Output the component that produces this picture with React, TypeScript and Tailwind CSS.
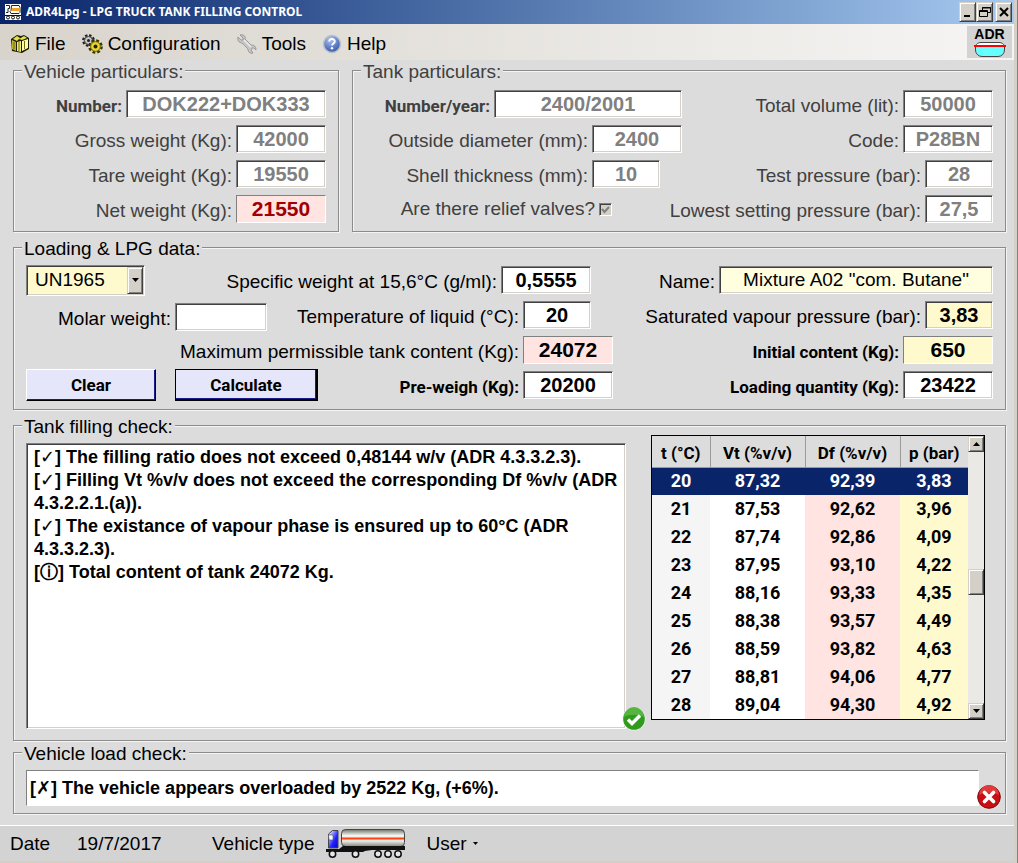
import React from 'react';
import clsx from 'clsx';

const sunken =
  'border border-t-[#808080] border-l-[#808080] border-b-white border-r-white shadow-[inset_1px_1px_0_#404040,inset_-1px_-1px_0_#d4d0c8]';
const flat = 'border border-t-[#808080] border-l-[#808080] border-b-white border-r-white';
const raised =
  'border border-t-[#d4d0c8] border-l-[#d4d0c8] border-b-[#404040] border-r-[#404040] bg-[#d4d0c8] shadow-[inset_1px_1px_0_#ffffff,inset_-1px_-1px_0_#808080]';
const narrow = "font-['Roboto',sans-serif] font-bold text-[17px]";

interface FieldProps {
  id: string;
  label: string;
  value: string;
  width: string;
  tone?: 'white' | 'pink' | 'yellow' | 'cream';
  className?: string;
  inputClass?: string;
  boldLabel?: boolean;
  isFlat?: boolean;
  disabled?: boolean;
}

const tones = {
  white: 'bg-white',
  pink: 'bg-[#ffe4e1]',
  yellow: 'bg-[#fffacd]',
  cream: 'bg-[#ffffe0]'
};

function Field({
  id,
  label,
  value,
  width,
  tone = 'white',
  className,
  inputClass = 'font-bold text-[20px]',
  boldLabel,
  isFlat,
  disabled
}: FieldProps) {
  return (
    <div className={clsx('flex h-7 items-center justify-end gap-1', className)}>
      <label htmlFor={id} className={clsx('pt-1 whitespace-nowrap', boldLabel && narrow)}>
        {label}
      </label>
      <input
        id={id}
        defaultValue={value}
        disabled={disabled}
        className={clsx(
          'h-7 shrink-0 text-center',
          width,
          tones[tone],
          isFlat ? flat : sunken,
          inputClass,
          disabled && 'text-[#808080]'
        )}
      />
    </div>
  );
}

interface GroupProps {
  title: string;
  className?: string;
  children: React.ReactNode;
}

function Group({ title, className, children }: GroupProps) {
  return (
    <fieldset
      className={clsx(
        'min-w-0 border border-[#8c8c8c] px-3 shadow-[1px_1px_0_#f4f4f4,inset_1px_1px_0_#f4f4f4]',
        className
      )}
    >
      <legend className="-ml-1 bg-[#dcdcdc] px-0.5 pt-1 leading-4">{title}</legend>
      {children}
    </fieldset>
  );
}

function BoxIcon() {
  return (
    <svg width="20" height="20" viewBox="0 0 20 20" aria-hidden="true">
      <path d="M1 5l6-4 4 1 3-1 5 3v11l-7 4-10-2z" fill="#1c1c08" />
      <path d="M2 6l4 2v9l-4-2z" fill="#b8b432" />
      <path d="M7 8l4-1v11l-4-1z" fill="#f2ee6c" />
      <path d="M12 7l6-2v9l-6 3z" fill="#fffca8" />
      <path d="M3 5l4-3 3 2-3 3zM9 5l5-3 3 2-5 2z" fill="#e8e04a" />
      <path d="M4 8v7M9 8v9M14.500 7v8" stroke="#6e6a10" strokeWidth="1" />
    </svg>
  );
}

function GearsIcon() {
  return (
    <svg width="21" height="20" viewBox="0 0 21 20" aria-hidden="true">
      <circle cx="6.500" cy="6.500" r="4.800" fill="#b8b8b8" stroke="#222" strokeWidth="3.200" strokeDasharray="2.200 1.570" />
      <circle cx="6.500" cy="6.500" r="4" fill="#c8c8c8" stroke="#444" />
      <circle cx="6.500" cy="6.500" r="1.500" fill="#222" />
      <circle cx="13.500" cy="12.500" r="5.500" fill="#c9b92a" stroke="#3a3400" strokeWidth="3.600" strokeDasharray="2.500 1.820" />
      <circle cx="13.500" cy="12.500" r="4.800" fill="#e6d83a" stroke="#7a6d00" />
      <circle cx="13.500" cy="12.500" r="2" fill="#2a2500" />
    </svg>
  );
}

function WrenchIcon() {
  return (
    <svg width="20" height="20" viewBox="0 0 20 20" aria-hidden="true">
      <path
        d="M3 1l3 3 0 2-2 0-3-3c-1 3 1 6 4 6l6 6c0 3 2 5 5 4l-2-3 1-2 2 0 2 2c0-4-2-5-5-5L8 5C9 2 6 0 3 1z"
        fill="#c6c6c6"
        stroke="#8e8e8e"
        strokeWidth="0.800"
      />
      <path d="M7 6l7 7" stroke="#eeeeee" strokeWidth="1.200" />
    </svg>
  );
}

function HelpIcon() {
  return (
    <svg width="20" height="20" viewBox="0 0 20 20" aria-hidden="true">
      <defs>
        <radialGradient id="help-fill" cx="0.4" cy="0.25" r="0.8">
          <stop offset="0" stopColor="#b4c6ee" />
          <stop offset="0.6" stopColor="#5d7cc4" />
          <stop offset="1" stopColor="#35549c" />
        </radialGradient>
      </defs>
      <circle cx="10" cy="10" r="8.500" fill="url(#help-fill)" stroke="#b9bfcd" strokeWidth="1.500" />
      <path d="M7.200 7.600c0-3.600 5.800-3.400 5.600 0-.1 1.900-2.800 2-2.800 4" fill="none" stroke="#fff" strokeWidth="1.900" />
      <circle cx="10" cy="14.300" r="1.200" fill="#fff" />
    </svg>
  );
}

function AppIcon() {
  return (
    <svg width="16" height="16" viewBox="0 0 16 16" aria-hidden="true">
      <rect width="16" height="16" fill="#fff" />
      <path d="M1 1.500h3.500v3H3v4H1M6.500 1.500H14l1 2v5l-1 1H6l-1-2 1-1z" fill="#fff" stroke="#222" />
      <rect x="7" y="4" width="8" height="3" fill="#f0a030" />
      <path d="M0 11.500h16" stroke="#111" />
      <g fill="#fff" stroke="#111">
        <circle cx="3" cy="13.500" r="1.500" />
        <circle cx="8" cy="13.500" r="1.500" />
        <circle cx="13" cy="13.500" r="1.500" />
      </g>
    </svg>
  );
}

function TankIcon() {
  return (
    <svg width="32" height="17" viewBox="0 0 32 17" aria-hidden="true">
      <path d="M2 5h28v4a6 6 0 0 1-6 6H8a6 6 0 0 1-6-6z" fill="#66ffff" />
      <path d="M2 5c0-2 2-3.500 5-3.500h18c3 0 5 1.500 5 3.500" fill="#fff" stroke="#444" />
      <path d="M1.500 5v4a6.500 6.500 0 0 0 6.500 6.500h16a6.500 6.500 0 0 0 6.500-6.500V5" fill="none" stroke="#444" />
      <path d="M0 5h32" stroke="#f00" strokeWidth="2" />
    </svg>
  );
}

function TruckIcon() {
  return (
    <svg width="80" height="31" viewBox="0 0 80 31" aria-hidden="true">
      <defs>
        <linearGradient id="tank-body" x1="0" y1="0" x2="0" y2="1">
          <stop offset="0" stopColor="#70746c" />
          <stop offset="0.35" stopColor="#f4f4f0" />
          <stop offset="0.7" stopColor="#e4e4de" />
          <stop offset="1" stopColor="#84887e" />
        </linearGradient>
        <linearGradient id="cab" x1="0" y1="0" x2="1" y2="1">
          <stop offset="0.1" stopColor="#e4e6ff" />
          <stop offset="0.6" stopColor="#2020ff" />
          <stop offset="1" stopColor="#0000c8" />
        </linearGradient>
      </defs>
      <path d="M2.500 20V6l4-3.500H12V20z" fill="url(#cab)" stroke="#445" />
      <path d="M2.500 7h4.500v5H3z" fill="#fff" stroke="#556" strokeWidth="0.700" />
      <rect x="15.500" y="1.500" width="63" height="17" rx="4" fill="url(#tank-body)" stroke="#444" />
      <path d="M16 10.500h62" stroke="#ff4010" strokeWidth="2" />
      <path d="M0 21h13l4-3h62v4H46l-7 1-2 1H0z" fill="#111" />
      <g fill="#e8e8e8" stroke="#111" strokeWidth="1.500">
        <circle cx="6.500" cy="26" r="3.200" />
        <circle cx="29.500" cy="26" r="3.200" />
        <circle cx="52" cy="26" r="3.200" />
        <circle cx="62" cy="26" r="3.200" />
        <circle cx="72" cy="26" r="3.200" />
      </g>
    </svg>
  );
}

function OkBadge() {
  return (
    <svg width="24" height="24" viewBox="0 0 24 24" role="img" aria-label="OK">
      <circle cx="12" cy="12" r="11.500" fill="#e8f4e4" />
      <circle cx="12" cy="12" r="10.800" fill="#2f9a1c" />
      <path d="M2 10a10 10 0 0 1 20 0c-5-3-15-3-20 0z" fill="#56b540" />
      <path d="M6 12.500l4 4 8-8" fill="none" stroke="#fff" strokeWidth="3.400" />
    </svg>
  );
}

function ErrorBadge() {
  return (
    <svg width="24" height="24" viewBox="0 0 24 24" role="img" aria-label="Error">
      <circle cx="12" cy="12" r="11.300" fill="#c80f14" stroke="#7c0a0c" />
      <path d="M2 10a10 10 0 0 1 20 0c-5-3-15-3-20 0z" fill="#e03a3a" />
      <path d="M7.500 7.500l9 9M16.500 7.500l-9 9" stroke="#fff" strokeWidth="3.600" strokeLinecap="round" />
    </svg>
  );
}

const menu = [
  { label: 'File', icon: <BoxIcon /> },
  { label: 'Configuration', icon: <GearsIcon /> },
  { label: 'Tools', icon: <WrenchIcon /> },
  { label: 'Help', icon: <HelpIcon /> }
];

const rows = [
  ['20', '87,32', '92,39', '3,83'],
  ['21', '87,53', '92,62', '3,96'],
  ['22', '87,74', '92,86', '4,09'],
  ['23', '87,95', '93,10', '4,22'],
  ['24', '88,16', '93,33', '4,35'],
  ['25', '88,38', '93,57', '4,49'],
  ['26', '88,59', '93,82', '4,63'],
  ['27', '88,81', '94,06', '4,77'],
  ['28', '89,04', '94,30', '4,92']
];

const columns = [
  { label: 't (°C)', width: 'w-[58px]', tone: 'bg-[#f5f5f5]' },
  { label: 'Vt (%v/v)', width: 'w-[95px]', tone: 'bg-white' },
  { label: 'Df (%v/v)', width: 'w-[95px]', tone: 'bg-[#ffe4e1]' },
  { label: 'p (bar)', width: 'w-[68px]', tone: 'bg-[#fffacd]' }
];

const fillingReport = `[✓] The filling ratio does not exceed 0,48144 w/v (ADR 4.3.3.2.3).
[✓] Filling Vt %v/v does not exceed the corresponding Df %v/v (ADR 4.3.2.2.1.(a)).
[✓] The existance of vapour phase is ensured up to 60°C (ADR 4.3.3.2.3).
[ⓘ] Total content of tank 24072 Kg.`;

const reportFont = "font-['Liberation_Sans','DejaVu_Sans',sans-serif] text-[18px] font-bold";

function TitleBar() {
  return (
    <header className="flex h-6 items-center bg-linear-to-r from-[#0a246a] to-[#a6caf0] pr-0.5 pl-[5px]">
      <AppIcon />
      <h1 className="ml-[5px] font-['Noto_Sans','Open_Sans',sans-serif] text-[12px] font-bold text-white">
        ADR4Lpg - LPG TRUCK TANK FILLING CONTROL
      </h1>
      <div className="ml-auto flex">
        <button aria-label="Minimize" className={clsx('h-5 w-[17px]', raised)}>
          <svg width="14" height="14" viewBox="0 0 14 14" className="mx-auto">
            <path d="M3 11h6" stroke="#000" strokeWidth="2" />
          </svg>
        </button>
        <button aria-label="Restore" className={clsx('h-5 w-[17px]', raised)}>
          <svg width="14" height="14" viewBox="0 0 14 14" className="mx-auto" fill="none" stroke="#000">
            <path d="M4.500 5V2.500h8v5H10M4 3h9" />
            <path d="M1.500 5.500h8v6h-8zM1 6.500h9" />
          </svg>
        </button>
        <button aria-label="Close" className={clsx('ml-0.5 h-5 w-[17px]', raised)}>
          <svg width="14" height="14" viewBox="0 0 14 14" className="mx-auto">
            <path d="M3 3l8 8M11 3l-8 8" stroke="#000" strokeWidth="2" />
          </svg>
        </button>
      </div>
    </header>
  );
}

function ScrollBar() {
  return (
    <div className="flex w-4 flex-col bg-[#ebe9e5]">
      <button aria-label="Scroll up" className={clsx('flex h-4 items-center justify-center', raised)}>
        <svg width="7" height="4" viewBox="0 0 7 4">
          <path d="M0 4l3.500-4L7 4z" />
        </svg>
      </button>
      <div className="h-[117px]" />
      <div className={clsx('h-[26px]', raised)} />
      <div className="flex-1" />
      <button aria-label="Scroll down" className={clsx('flex h-4 items-center justify-center', raised)}>
        <svg width="7" height="4" viewBox="0 0 7 4">
          <path d="M0 0l3.500 4L7 0z" />
        </svg>
      </button>
    </div>
  );
}

function PressureTable() {
  return (
    <div className="flex shrink-0 self-start border border-black">
      <table className={clsx('table-fixed border-collapse text-center', narrow)}>
        <thead>
          <tr className="h-[31px] bg-[#dcdcdc]">
            {columns.map(col => (
              <th
                key={col.label}
                className={clsx('border-r border-b border-[#9a9a9a] p-0 pt-1 leading-6 last:border-r-0', col.width)}
              >
                {col.label}
              </th>
            ))}
          </tr>
        </thead>
        <tbody>
          {rows.map((row, i) => (
            <tr key={row[0]} className={clsx('h-7 text-[18px]', i === 0 && 'text-white')}>
              {row.map((cell, j) => (
                <td key={j} className={clsx('p-0 leading-6', i === 0 ? 'bg-[#0a246a]' : columns[j].tone)}>
                  {cell}
                </td>
              ))}
            </tr>
          ))}
        </tbody>
      </table>
      <ScrollBar />
    </div>
  );
}

export default function App() {
  return (
    <div className="flex min-h-screen flex-col border-r border-[#808080] bg-[#d4d0c8] pr-[3px] pb-0.5 font-['Liberation_Sans',Arial,sans-serif] text-[19px] leading-6 text-black">
      <TitleBar />

      <nav className="flex h-9 items-center bg-linear-to-r from-[#d8d4cc] to-[#f6f5f4] pr-0.5 pl-[10px]">
        <div className="flex gap-4 pt-[3px]">
          {menu.map(item => (
            <button key={item.label} className="flex items-center gap-[5px]">
              {item.icon}
              {item.label}
            </button>
          ))}
        </div>
        <div className="ml-auto flex h-8 w-[45px] flex-col items-center bg-[#d3d3d3] pt-0.5">
          <span className="text-[14px] leading-[13px] font-bold">ADR</span>
          <TankIcon />
        </div>
      </nav>

      <main className="flex flex-1 flex-col bg-[#dcdcdc] pr-2 pb-[11px] pl-[13px]">
        <div className="flex gap-[13px] text-[#404040]">
          <Group title="Vehicle particulars:" className="w-[326px] shrink-0">
            <div className="flex flex-col gap-[7px] pt-[10px] pb-2">
              <Field id="number" label="Number:" value="DOK222+DOK333" width="w-[200px]" boldLabel disabled />
              <Field id="gross" label="Gross weight (Kg):" value="42000" width="w-[90px]" disabled />
              <Field id="tare" label="Tare weight (Kg):" value="19550" width="w-[90px]" disabled />
              <Field
                id="net"
                label="Net weight (Kg):"
                value="21550"
                width="w-[90px]"
                tone="pink"
                isFlat
                inputClass="font-bold text-[21px] text-[#a00000]"
              />
            </div>
          </Group>

          <Group title="Tank particulars:" className="flex-1">
            <div className="flex pt-[10px] pb-2">
              <div className="flex w-[317px] shrink-0 flex-col gap-[7px]">
                <Field id="year" label="Number/year:" value="2400/2001" width="w-[188px]" boldLabel disabled />
                <Field id="diameter" label="Outside diameter (mm):" value="2400" width="w-[90px]" disabled />
                <Field
                  id="shell"
                  label="Shell thickness (mm):"
                  value="10"
                  width="w-[68px]"
                  className="pr-[22px]"
                  disabled
                />
                <div className="flex h-7 items-center justify-end gap-1 pr-[70px]">
                  <label htmlFor="relief" className="whitespace-nowrap">
                    Are there relief valves?
                  </label>
                  <span className="relative flex">
                    <input
                      id="relief"
                      type="checkbox"
                      defaultChecked
                      disabled
                      className={clsx('h-[13px] w-[13px] appearance-none bg-[#d4d0c8]', sunken)}
                    />
                    <svg width="13" height="13" viewBox="0 0 13 13" className="pointer-events-none absolute inset-0">
                      <path d="M3 6l2.500 3L10 4" fill="none" stroke="#808080" strokeWidth="2" />
                    </svg>
                  </span>
                </div>
              </div>
              <div className="flex min-w-0 flex-1 flex-col gap-[7px]">
                <Field id="volume" label="Total volume (lit):" value="50000" width="w-[90px]" disabled />
                <Field id="code" label="Code:" value="P28BN" width="w-[90px]" disabled />
                <Field id="test" label="Test pressure (bar):" value="28" width="w-[68px]" disabled />
                <Field id="lowest" label="Lowest setting pressure (bar):" value="27,5" width="w-[68px]" disabled />
              </div>
            </div>
          </Group>
        </div>

        <Group title="Loading & LPG data:" className="mt-[5px]">
          <div className="flex flex-col gap-[7px] pt-[9px] pb-[10px]">
            <div className="flex h-7 items-center">
              <div className="relative">
                <select
                  aria-label="UN number"
                  defaultValue="UN1965"
                  className={clsx('h-[31px] w-[119px] appearance-none bg-[#fffacd] pl-2', sunken)}
                >
                  <option>UN1965</option>
                </select>
                <span
                  className={clsx(
                    'pointer-events-none absolute top-0.5 right-0.5 bottom-0.5 flex w-4 items-center justify-center',
                    raised
                  )}
                >
                  <svg width="7" height="4" viewBox="0 0 7 4">
                    <path d="M0 0l3.500 4L7 0z" />
                  </svg>
                </span>
              </div>
              <Field
                id="specific"
                label="Specific weight at 15,6°C (g/ml):"
                value="0,5555"
                width="w-[90px]"
                className="ml-auto pr-[22px]"
              />
              <Field
                id="name"
                label="Name:"
                value={'Mixture A02 "com. Butane"'}
                width="w-[274px]"
                tone="cream"
                inputClass="text-[19px]"
                className="w-[380px]"
              />
            </div>
            <div className="flex h-7 items-center">
              <Field id="molar" label="Molar weight:" value="" width="w-[92px]" className="ml-8 pt-1" />
              <Field
                id="temperature"
                label="Temperature of liquid (°C):"
                value="20"
                width="w-[68px]"
                className="ml-auto pr-[22px]"
              />
              <Field
                id="vapour"
                label="Saturated vapour pressure (bar):"
                value="3,83"
                width="w-[68px]"
                tone="yellow"
                className="w-[380px]"
              />
            </div>
            <div className="flex h-7 items-center">
              <Field
                id="maximum"
                label="Maximum permissible tank content (Kg):"
                value="24072"
                width="w-[90px]"
                tone="pink"
                isFlat
                inputClass="font-bold text-[21px]"
                className="ml-auto"
              />
              <Field
                id="initial"
                label="Initial content (Kg):"
                value="650"
                width="w-[90px]"
                tone="yellow"
                isFlat
                boldLabel
                inputClass="font-bold text-[21px]"
                className="w-[380px]"
              />
            </div>
            <div className="flex h-7 items-center">
              <button
                className={clsx(
                  'h-8 w-[130px] border border-t-white border-l-white border-r-black border-b-black bg-[#e6e6fa] shadow-[inset_-1px_-1px_0_#1a1a8c]',
                  narrow
                )}
              >
                Clear
              </button>
              <button
                className={clsx(
                  'ml-[19px] h-8 w-[143px] border border-r-2 border-b-2 border-black bg-[#e6e6fa] shadow-[inset_-1px_-1px_0_#1a1a8c]',
                  narrow
                )}
              >
                Calculate
              </button>
              <Field
                id="preweigh"
                label="Pre-weigh (Kg):"
                value="20200"
                width="w-[90px]"
                boldLabel
                className="ml-auto"
              />
              <Field
                id="quantity"
                label="Loading quantity (Kg):"
                value="23422"
                width="w-[90px]"
                boldLabel
                className="w-[380px]"
              />
            </div>
          </div>
        </Group>

        <Group title="Tank filling check:" className="mt-[5px] flex flex-1 flex-col">
          <div className="flex h-full gap-[25px] pr-2 pb-[11px]">
            <div className="relative mt-2 flex min-h-[286px] flex-1">
              <textarea
                aria-label="Tank filling check"
                readOnly
                value={fillingReport}
                className={clsx(
                  'flex-1 resize-none overflow-hidden bg-white px-[7px] py-0.5 leading-[23px]',
                  sunken,
                  reportFont
                )}
              />
              <span className="absolute -right-5 -bottom-[2px]">
                <OkBadge />
              </span>
            </div>
            <PressureTable />
          </div>
        </Group>

        <Group title="Vehicle load check:" className="mt-px">
          <div className="relative pt-2 pr-[14px] pb-[7px]">
            <input
              aria-label="Vehicle load check"
              readOnly
              value="[✗] The vehicle appears overloaded by 2522 Kg, (+6%)."
              className={clsx('block h-9 w-full bg-white px-[3px]', flat, reportFont)}
            />
            <span className="absolute -right-2 bottom-1">
              <ErrorBadge />
            </span>
          </div>
        </Group>
      </main>

      <footer className="flex h-9 items-center border-t border-white bg-[#d3d3d3] pl-[10px]">
        <span className="w-[67px]">Date</span>
        <span className="w-[135px]">19/7/2017</span>
        <span className="mr-3">Vehicle type</span>
        <TruckIcon />
        <button className="ml-5 flex items-center gap-[6px]">
          User
          <svg width="5" height="3" viewBox="0 0 5 3" aria-hidden="true">
            <path d="M0 0h5L2.500 3z" />
          </svg>
        </button>
      </footer>
    </div>
  );
}
